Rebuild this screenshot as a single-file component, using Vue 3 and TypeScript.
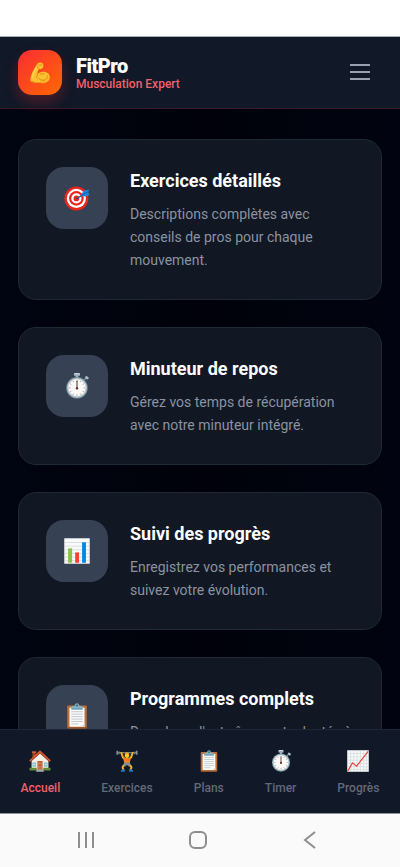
<script setup lang="ts">
import { defineComponent, h, ref } from 'vue'

type IconName = 'arm' | 'target' | 'stopwatch' | 'bars' | 'clipboard' | 'house' | 'lifter' | 'trend'

interface Feature {
  icon: IconName
  title: string
  text: string
}

interface Tab {
  id: string
  icon: IconName
  label: string
}

const artwork: Record<IconName, string> = {
  arm: `
    <path fill="#fbc02d" d="M50 8C58 0 76 1 81 9c5 9 3 23-4 29-6 5-14 6-19 3-6 9-9 20-9 31 6-9 18-16 33-16 24 0 39 13 39 32 0 21-19 35-47 35-30 0-58-3-65-12-4-8 4-42 19-68 8-14 14-26 22-35z"/>
    <path fill="#e99b17" d="M10 109c28 10 58 12 88 0-16 18-76 18-88 0z"/>
    <path fill="none" stroke="#d9801c" stroke-width="5" stroke-linecap="round" d="M57 17c6 4 12 3 18-2M58 40c-5-3-8-7-8-12M49 72c-4 8-5 15-3 22M64 72c6-5 15-6 22-1M106 80c5 15-6 26-25 26-10 0-17-3-23-9"/>
    <path fill="#ffd95c" d="M43 31l5 7C34 54 25 73 22 91l-7 4c4-24 15-48 28-64z"/>`,
  target: `
    <circle cx="61" cy="66" r="59" fill="#e9251e"/>
    <circle cx="61" cy="66" r="47" fill="#fff"/>
    <circle cx="61" cy="66" r="36" fill="#e9251e"/>
    <circle cx="61" cy="66" r="25" fill="#fff"/>
    <circle cx="61" cy="66" r="14" fill="#e9251e"/>
    <path d="M63 66l38-23" stroke="#0b5c9b" stroke-width="6" stroke-linecap="round"/>
    <path fill="#1e88e5" d="M82 50l14-21 28-7-5 15 8 12-28 7-17-6z"/>
    <path d="M87 50l34-18" stroke="#0b5796" stroke-width="4"/>`,
  stopwatch: `
    <path fill="#9bb0bc" d="M49 1h30v13h-8v12H57V14h-8z"/>
    <path fill="#dce5e9" d="M52 1h24v5H52z"/>
    <path d="M98 36l10-11" stroke="#70858f" stroke-width="8"/>
    <rect x="104" y="17" width="18" height="13" rx="5" fill="#adbdc5" transform="rotate(38 113 23)"/>
    <circle cx="64" cy="73" r="53" fill="#78909c"/>
    <circle cx="64" cy="73" r="49" fill="#b6cbd4"/>
    <circle cx="64" cy="73" r="42" fill="#fafafa"/>
    <path stroke="#c57b58" stroke-width="4" d="M64 34v7M64 105v7M25 73h7M96 73h7M44 39l4 6M80 101l4 6M30 53l6 4M92 89l6 4M30 93l6-4M92 57l6-4M44 107l4-6M80 45l4-6"/>
    <path stroke="#533127" stroke-width="5" stroke-linecap="round" d="M64 77V41"/>
    <circle cx="64" cy="75" r="6" fill="#6b3226"/>`,
  bars: `
    <path fill="#fafafa" d="M2 2h124v124H2z"/>
    <path stroke="#c3ccd1" stroke-width="3" d="M3 22h122M3 40h122M3 58h122M3 76h122M3 94h122M3 112h122"/>
    <path fill="none" stroke="#d7dde0" stroke-width="3" d="M3 3h122v122H3z"/>
    <path fill="#8bc34a" d="M20 51h20v71H20z"/>
    <path fill="#f44336" d="M55 71h19v51H55z"/>
    <path fill="#0288e5" d="M89 21h19v101H89z"/>`,
  clipboard: `
    <rect x="16" y="12" width="96" height="114" rx="5" fill="#bd7138"/>
    <path fill="#8f4b20" d="M19 120h91v6H19z"/>
    <path fill="#fafafa" d="M27 23h74v94H27z"/>
    <path fill="#d5dce0" d="M84 117l17-18v18z"/>
    <path stroke="#b3bdc2" stroke-width="4" d="M36 43h56M36 55h56M36 67h56M36 79h56M36 91h56M36 103h36"/>
    <path fill="#83b5c8" d="M39 16h13c2-19 22-19 24 0h13l4 15H35z"/>
    <circle cx="64" cy="12" r="5" fill="#385965"/>
    <path fill="#548ca2" d="M36 27h56v5H36z"/>`,
  house: `
    <path fill="#a93d22" d="M20 12h19v31H20z"/>
    <path fill="#d96c45" d="M17 8h25v8H17z"/>
    <path fill="#f5eee2" d="M15 62l49-45 49 45v55H15z"/>
    <path fill="#dc5b31" d="M64 2l63 59-7 8-56-51L8 69l-7-8z"/>
    <path fill="#9f3d20" d="M64 14l57 52-3 3-54-48L10 69l-3-3z"/>
    <path fill="#74b6c7" d="M20 73h21v25H20zM87 73h21v25H87z"/>
    <path stroke="#e3f3f5" stroke-width="3" d="M30 73v25M98 73v25M20 85h21M87 85h21"/>
    <path fill="#b75a34" d="M49 64h30v54H49z"/>
    <path fill="#d88a61" d="M54 71h8v15h-8zM67 71h7v15h-7zM54 92h8v17h-8zM67 92h7v17h-7z"/>
    <path fill="#668b37" d="M3 103h42v16H3zM83 103h42v16H83z"/>
    <path fill="#a9adb0" d="M47 113h34l7 14H40z"/>`,
  lifter: `
    <path stroke="#b4b9bc" stroke-width="5" d="M8 16h112"/>
    <path stroke="#8b9296" stroke-width="9" d="M7 5v23M121 5v23"/>
    <path stroke="#737b80" stroke-width="8" d="M18 8v17M110 8v17"/>
    <path fill="none" stroke="#fbb51b" stroke-width="11" stroke-linecap="round" stroke-linejoin="round" d="M31 17l9 26 14 10M97 17l-9 26-14 10"/>
    <ellipse cx="64" cy="31" rx="13" ry="16" fill="#ffca28"/>
    <path fill="#e69a17" d="M51 27c0-17 26-17 26 0-6-7-20-7-26 0z"/>
    <path fill="#ff7b20" d="M40 43l15 4h18l15-4-9 36H49z"/>
    <path fill="#858d91" d="M48 72h32l9 19-11 7-14-11-14 11-11-7z"/>
    <path fill="none" stroke="#fbb51b" stroke-width="11" stroke-linejoin="round" d="M45 89l-7 12 6 17M83 89l7 12-6 17"/>
    <path fill="#2872c7" d="M37 112h14v14H28v-6zM77 112h14l9 8v6H77z"/>`,
  trend: `
    <path fill="#fafafa" d="M2 2h124v124H2z"/>
    <path stroke="#c4ced3" stroke-width="3" d="M21 2v124M40 2v124M59 2v124M78 2v124M97 2v124M113 2v124M2 21h124M2 40h124M2 59h124M2 78h124M2 97h124M2 113h124"/>
    <path fill="none" stroke="#d4dbdf" stroke-width="3" d="M3 3h122v122H3z"/>
    <path fill="none" stroke="#e74742" stroke-width="7" stroke-linejoin="round" d="M4 123l28-48 24 19 67-86"/>`,
}

const ArtIcon = defineComponent({
  props: { name: { type: String, required: true } },
  setup(props) {
    return () =>
      h('svg', {
        viewBox: '0 0 128 128',
        fill: 'none',
        'aria-hidden': 'true',
        innerHTML: artwork[props.name as IconName],
      })
  },
})

const features: Feature[] = [
  {
    icon: 'target',
    title: 'Exercices détaillés',
    text: 'Descriptions complètes avec conseils de pros pour chaque mouvement.',
  },
  {
    icon: 'stopwatch',
    title: 'Minuteur de repos',
    text: 'Gérez vos temps de récupération avec notre minuteur intégré.',
  },
  {
    icon: 'bars',
    title: 'Suivi des progrès',
    text: 'Enregistrez vos performances et suivez votre évolution.',
  },
  {
    icon: 'clipboard',
    title: 'Programmes complets',
    text: "Des plans d'entraînement adaptés à tous les niveaux.",
  },
]

const tabs: Tab[] = [
  { id: 'home', icon: 'house', label: 'Accueil' },
  { id: 'exercises', icon: 'lifter', label: 'Exercices' },
  { id: 'plans', icon: 'clipboard', label: 'Plans' },
  { id: 'timer', icon: 'stopwatch', label: 'Timer' },
  { id: 'progress', icon: 'trend', label: 'Progrès' },
]

const activeTab = ref('home')
</script>

<template>
  <div class="screen">
    <div class="status-bar"></div>

    <header class="header">
      <div class="logo"><ArtIcon name="arm" class="logo-icon" /></div>
      <div class="brand">
        <h1 class="brand-name">FitPro</h1>
        <p class="brand-tagline">Musculation Expert</p>
      </div>
      <button class="menu" type="button" aria-label="Menu">
        <svg class="menu-icon" viewBox="0 0 24 24" aria-hidden="true">
          <path d="M2 4h20M2 11h20M2 18h20" />
        </svg>
      </button>
    </header>

    <main class="content">
      <article v-for="feature in features" :key="feature.title" class="card">
        <div class="tile"><ArtIcon :name="feature.icon" class="tile-icon" /></div>
        <div class="card-body">
          <h2 class="card-title">{{ feature.title }}</h2>
          <p class="card-text">{{ feature.text }}</p>
        </div>
      </article>
    </main>

    <nav class="tabs">
      <button
        v-for="tab in tabs"
        :key="tab.id"
        type="button"
        class="tab"
        :class="{ active: tab.id === activeTab }"
        @click="activeTab = tab.id"
      >
        <ArtIcon :name="tab.icon" class="tab-icon" />
        <span>{{ tab.label }}</span>
      </button>
    </nav>

    <div class="system-bar">
      <button class="system-button" type="button" aria-label="Applications récentes">
        <svg class="system-icon" viewBox="0 0 20 20" aria-hidden="true"><path d="M3 2v16M10 2v16M17 2v16" /></svg>
      </button>
      <button class="system-button" type="button" aria-label="Écran d'accueil">
        <svg class="system-icon" viewBox="0 0 20 20" aria-hidden="true"><rect x="2" y="2" width="16" height="16" rx="5" /></svg>
      </button>
      <button class="system-button" type="button" aria-label="Retour">
        <svg class="system-icon" viewBox="0 0 20 20" aria-hidden="true"><path d="M15 2L5 10l10 8" /></svg>
      </button>
    </div>
  </div>
</template>

<style>
body {
  margin: 0;
  background: #020412;
}
</style>

<style scoped>
.screen {
  display: flex;
  flex-direction: column;
  height: 100vh;
  background: linear-gradient(90deg, #010511 0%, #00010a 50%, #010410 100%);
  color: #fff;
  font-family: Roboto, "Liberation Sans", sans-serif;
}

h1,
h2,
p {
  margin: 0;
}

button {
  padding: 0;
  border: 0;
  background: none;
  color: inherit;
  font: inherit;
  cursor: pointer;
}

.status-bar {
  flex: none;
  height: 36px;
  background: #fff;
  border-bottom: 1px solid #a9adb5;
}

.header {
  z-index: 1;
  flex: none;
  display: flex;
  align-items: center;
  gap: 14px;
  padding: 13px 28px 13px 18px;
  border-bottom: 1px solid #3c1c2a;
  background: #111827;
}

.logo {
  display: grid;
  place-items: center;
  width: 44px;
  height: 45px;
  border-radius: 14px;
  background: linear-gradient(135deg, #fb2c36, #ff6900);
  box-shadow: 0 7px 14px rgba(251, 44, 54, 0.25);
}

.logo-icon {
  width: 22px;
  height: 22px;
}

.brand {
  flex: 1;
}

.brand-name {
  font-size: 20px;
  line-height: 22px;
  font-weight: 900;
  letter-spacing: -0.025em;
}

.brand-tagline {
  font-size: 12px;
  line-height: 14px;
  font-weight: 500;
  color: #f2616b;
}

.menu-icon {
  display: block;
  width: 24px;
  height: 24px;
  stroke: #99a1af;
  stroke-width: 2;
}

.content {
  flex: 1;
  min-height: 0;
  display: flex;
  flex-direction: column;
  gap: 27px;
  padding: 30px 18px;
  overflow-y: auto;
  scrollbar-width: none;
}

.card {
  flex: none;
  display: flex;
  align-items: flex-start;
  gap: 22px;
  padding: 27px;
  border: 1px solid #1e2937;
  border-radius: 18px;
  background: #111824;
}

.tile {
  flex: none;
  display: grid;
  place-items: center;
  width: 62px;
  height: 62px;
  border-radius: 18px;
  background: #364153;
}

.tile-icon {
  width: 26px;
  height: 26px;
}

.card-title {
  margin-bottom: 9px;
  font-size: 18px;
  line-height: 27px;
  font-weight: 700;
}

.card-text {
  font-size: 14px;
  line-height: 23px;
  color: #8b92a0;
}

.tabs {
  z-index: 1;
  flex: none;
  display: flex;
  justify-content: space-around;
  padding: 20px 0 17px;
  border-top: 1px solid #1d2737;
  background: #111827;
}

.tab {
  display: flex;
  flex-direction: column;
  align-items: center;
  gap: 8px;
  color: #626978;
  font-size: 12px;
  line-height: 16px;
  font-weight: 500;
}

.tab.active {
  color: #f2616b;
}

.tab-icon {
  width: 22px;
  height: 22px;
}

.system-bar {
  flex: none;
  display: flex;
  justify-content: space-between;
  padding: 16px 80px 17px 76px;
  border-top: 1px solid #8b8f97;
  background: #fafafa;
}

.system-icon {
  display: block;
  width: 20px;
  height: 20px;
  fill: none;
  stroke: #8e8e8e;
  stroke-width: 2;
}
</style>
